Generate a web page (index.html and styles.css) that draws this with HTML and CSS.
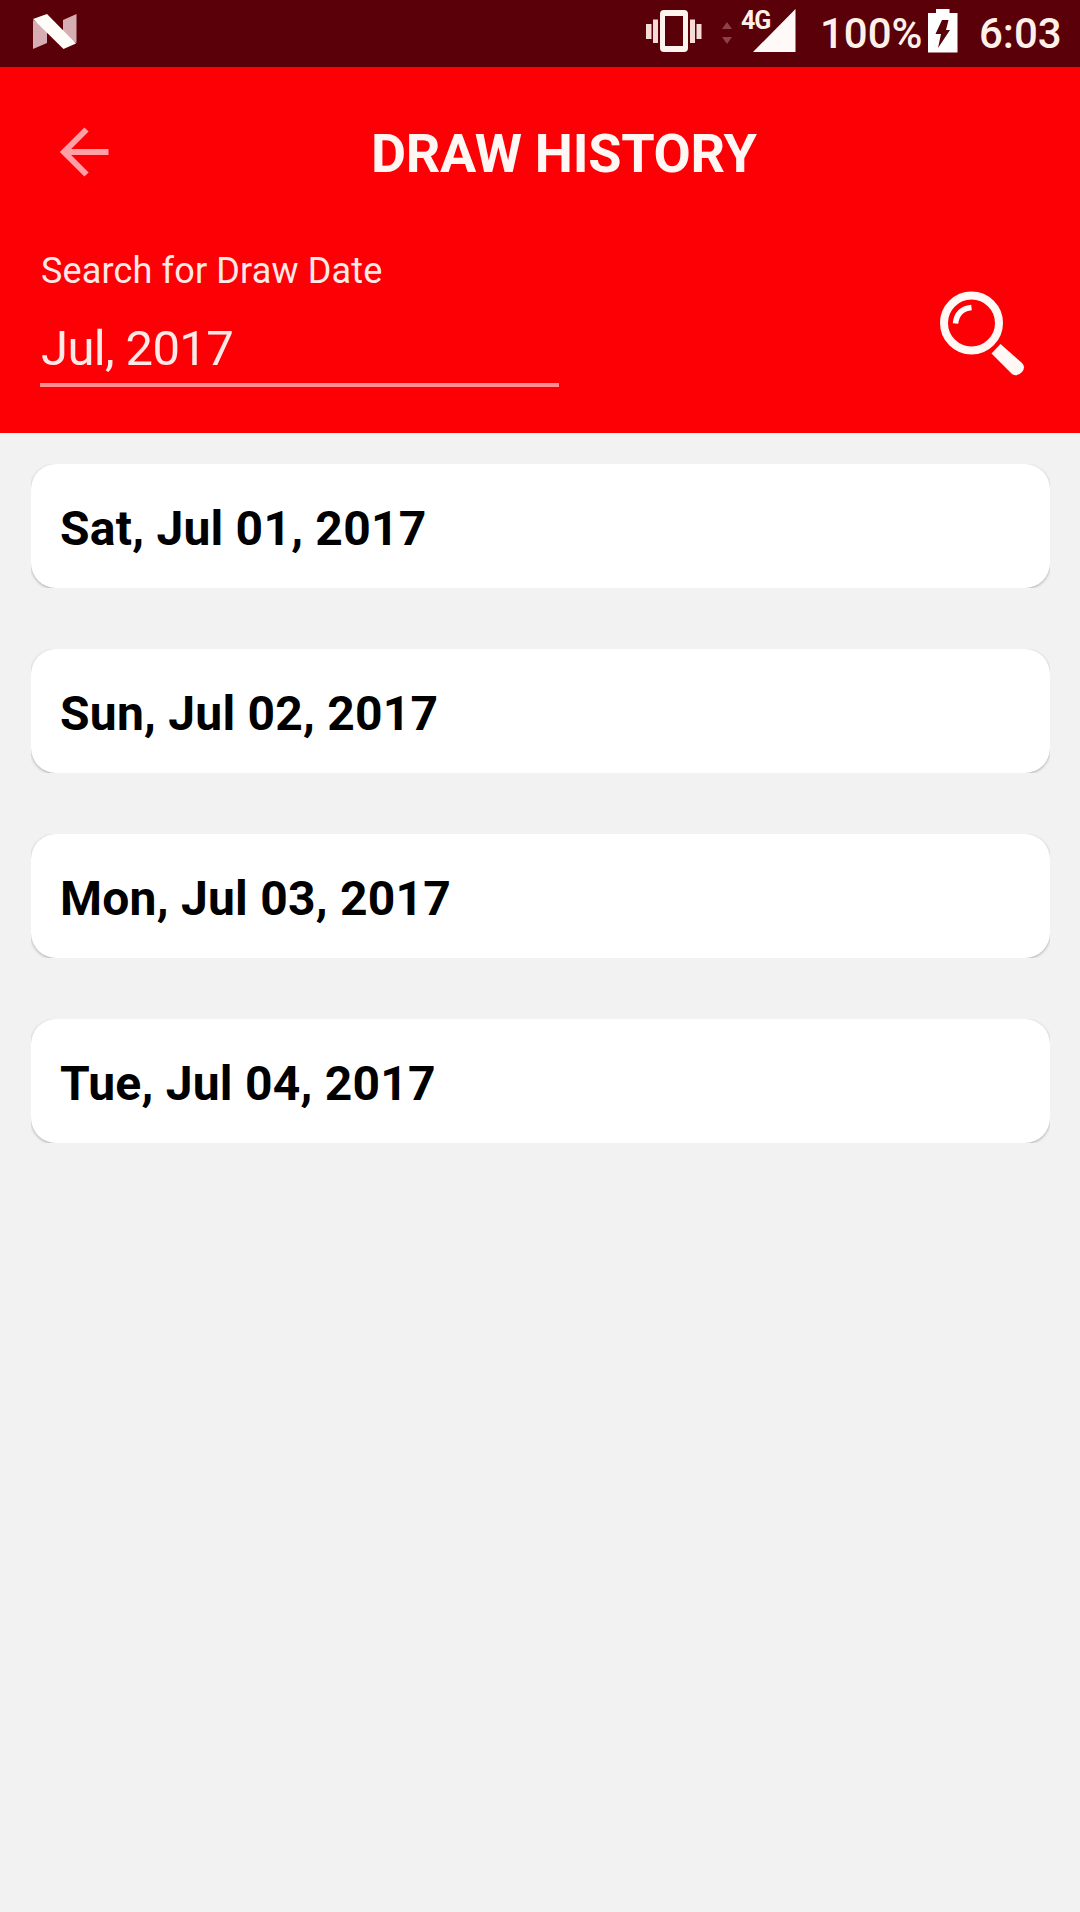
FILE: index.html
```html
<!DOCTYPE html>
<html lang="en">
<head>
<meta charset="utf-8">
<title>Draw History</title>
<link rel="stylesheet" href="styles.css">
</head>
<body>
<div class="status-bar">
  <svg class="nougat" width="44" height="36" viewBox="0 0 44 36">
    <path d="M0 6 L14 14 V29 L0 35Z M30 6 L43.500 0 V29 L30 22Z" fill="#d6adb3"/>
    <path d="M0 5 L14 0 L43 29.500 L30.500 35Z" fill="#fffdf8"/>
  </svg>
  <svg class="vibrate" width="56" height="44" viewBox="0 0 56 44">
    <path fill="#fff3ed" fill-rule="evenodd" d="M18 0H38Q42 0 42 4V38Q42 42 38 42H18Q14 42 14 38V4Q14 0 18 0ZM19 6V36H37V6Z"/>
    <path fill="#f5dcd7" d="M0 14H5.500V29H0ZM7 9.500H12V33H7ZM44 9.500H49V33H44ZM50.500 14H55.500V29H50.500Z"/>
  </svg>
  <svg class="traffic" width="10" height="22" viewBox="0 0 10 22">
    <path fill="#8d4148" d="M0 7L5 0L10 7ZM0 15H10L5 22Z"/>
  </svg>
  <div class="signal">
    <span class="network">4G</span>
    <svg width="43" height="44" viewBox="0 0 43 44"><path fill="#fffaf7" d="M42.500 0V43H0Z"/></svg>
  </div>
  <span class="percent">100%</span>
  <svg class="battery" width="30" height="44" viewBox="0 0 30 44">
    <path fill="#fff" fill-rule="evenodd" d="M8 0H21.500V4H29.500V43.500H0V4H8ZM14 11H20.500L18 21H22L10 39L13 25H7.500Z"/>
  </svg>
  <span class="clock">6:03</span>
</div>
<header class="header">
  <div class="toolbar">
    <svg class="back" width="50" height="50" viewBox="0 0 50 50">
      <path d="M26.500 2.500L4 25L26.500 47.500M4 25H48.500" fill="none" stroke="#ff9fa6" stroke-width="6"/>
    </svg>
    <h1 class="title">DRAW HISTORY</h1>
  </div>
  <div class="search">
    <div class="field">
      <label class="label">Search for Draw Date</label>
      <div class="value">Jul, 2017</div>
    </div>
    <svg class="magnifier" width="86" height="86" viewBox="0 0 86 86">
      <circle cx="31.500" cy="32" r="27.500" fill="none" stroke="#fff8f5" stroke-width="8"/>
      <path d="M15.500 32.500Q17 18 31.500 16.500" fill="none" stroke="#fff" stroke-width="5.500"/>
      <path d="M60.500 53L82 72Q86 76 82 81Q77 86.500 72 83L51.500 62.500Z" fill="#fff8f5"/>
    </svg>
  </div>
</header>
<main class="list">
  <div class="card">Sat, Jul 01, 2017</div>
  <div class="card">Sun, Jul 02, 2017</div>
  <div class="card">Mon, Jul 03, 2017</div>
  <div class="card">Tue, Jul 04, 2017</div>
</main>
</body>
</html>
```
FILE: styles.css
```css
* { box-sizing: border-box; }
body {
  margin: 0;
  min-height: 1912px;
  background: #f2f2f2;
  font-family: Roboto, sans-serif;
}
svg { display: block; flex: none; }
.status-bar {
  display: flex;
  align-items: flex-start;
  height: 67px;
  padding: 9px 19px 0 33px;
  background: #590009;
  color: #fff1ea;
  font-size: 42px;
  font-weight: 500;
  line-height: 49px;
  white-space: nowrap;
}
.nougat { margin-top: 5px; }
.vibrate { margin: 1px 0 0 auto; }
.traffic { margin: 13px 0 0 20px; }
.signal { position: relative; margin-left: 21px; }
.network {
  position: absolute;
  left: -12px;
  top: -3px;
  font-size: 25px;
  font-weight: 700;
  line-height: 30px;
  letter-spacing: -1px;
}
.percent { width: 108px; margin-left: 24px; }
.clock { width: 82px; margin-left: 21px; }
.header {
  height: 366px;
  background: #fd0006;
  color: #ffe9e7;
}
.toolbar {
  display: flex;
  align-items: center;
  height: 174px;
  padding-left: 60px;
}
.back { margin-top: -5px; }
.title {
  margin: 0 0 0 261px;
  color: #fff7f4;
  font-size: 54px;
  font-weight: 700;
  line-height: 64px;
  letter-spacing: -0.3px;
  white-space: nowrap;
}
.search {
  display: flex;
  justify-content: space-between;
  padding: 8px 54px 0 40px;
}
.field {
  width: 519px;
  height: 138px;
  border-bottom: 4px solid #ff8e92;
}
.label {
  display: block;
  padding-left: 1px;
  font-size: 36px;
  line-height: 44px;
  letter-spacing: 0.15px;
}
.value {
  margin-top: 26px;
  padding-left: 1px;
  font-size: 49px;
  line-height: 59px;
  letter-spacing: -0.65px;
}
.magnifier { margin-top: 42px; }
.list {
  display: flex;
  flex-direction: column;
  gap: 61px;
  padding: 31px 30px 0 31px;
}
/* The clip keeps the shadow inside the card's box, so it shows only at the rounded corners. */
.card {
  height: 124px;
  padding: 0 29px;
  border-radius: 25px;
  background: #fff;
  box-shadow: 0 1px 3px #aaa;
  clip-path: inset(0);
  color: #000;
  font-size: 48px;
  font-weight: 700;
  line-height: 130px;
  letter-spacing: 0.23px;
}
```
